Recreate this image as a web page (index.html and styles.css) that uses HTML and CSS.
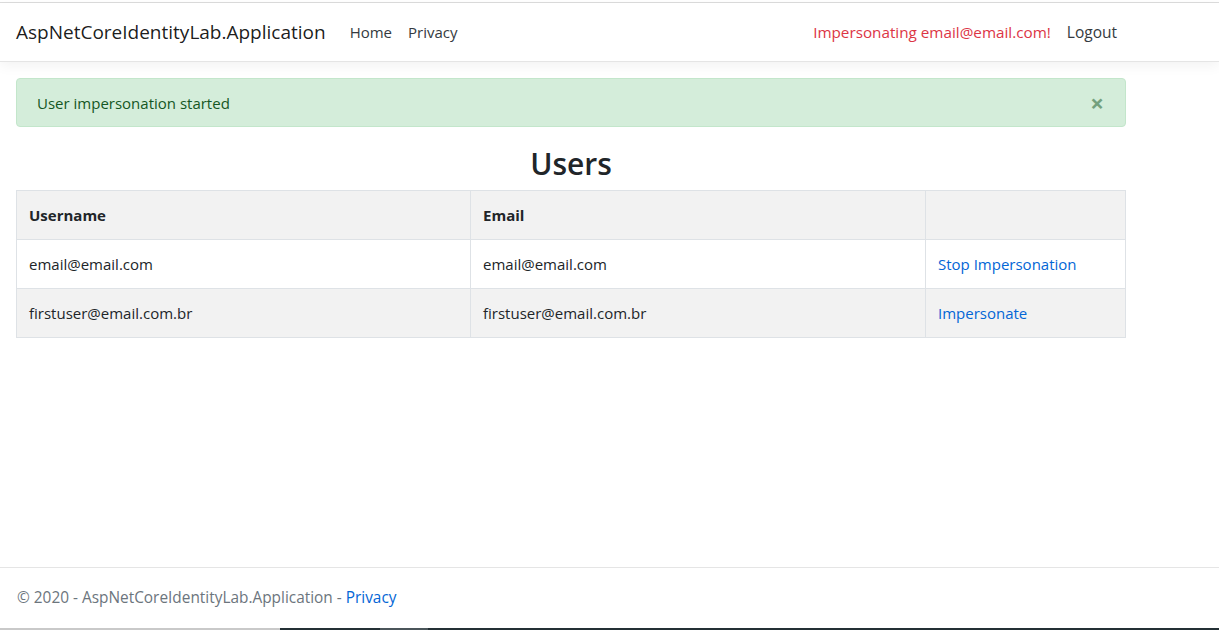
FILE: index.html
```html
<!DOCTYPE html>
<html lang="en">
<head>
<meta charset="utf-8">
<title>Users - AspNetCoreIdentityLab.Application</title>
<link rel="stylesheet" href="styles.css">
</head>
<body>
<div class="page">
  <div class="topline"></div>
  <header class="navbar">
    <div class="nav-container">
      <a class="brand" href="#">AspNetCoreIdentityLab.Application</a>
      <ul class="nav">
        <li><a class="nav-link" href="#">Home</a></li>
        <li><a class="nav-link" href="#">Privacy</a></li>
      </ul>
      <ul class="nav nav-right">
        <li><span class="nav-link text-danger">Impersonating email@email.com!</span></li>
        <li><a class="nav-link logout" href="#">Logout</a></li>
      </ul>
    </div>
  </header>
  <main class="container">
    <div class="alert" role="alert">
      <span>User impersonation started</span>
      <button class="close" type="button" aria-label="Close">×</button>
    </div>
    <h2 class="title">Users</h2>
    <table class="table">
      <colgroup>
        <col class="col-user">
        <col class="col-email">
        <col class="col-action">
      </colgroup>
      <thead>
        <tr><th>Username</th><th>Email</th><th></th></tr>
      </thead>
      <tbody>
        <tr><td>email@email.com</td><td>email@email.com</td><td><a href="#">Stop Impersonation</a></td></tr>
        <tr class="striped"><td>firstuser@email.com.br</td><td>firstuser@email.com.br</td><td><a href="#">Impersonate</a></td></tr>
      </tbody>
    </table>
  </main>
  <footer class="footer">
    <div class="footer-inner">© 2020 - AspNetCoreIdentityLab.Application - <a href="#">Privacy</a></div>
  </footer>
  <div class="bottom-strip">
    <span class="strip-light"></span>
    <span class="strip-dark"></span>
    <span class="strip-mid"></span>
    <span class="strip-dark fill"></span>
  </div>
</div>
</body>
</html>
```
FILE: styles.css
```css
* { box-sizing: border-box; }
html, body { margin: 0; padding: 0; height: 100%; }
body {
  font-family: "Open Sans", "Liberation Sans", sans-serif;
  font-size: 15px;
  line-height: 24px;
  color: #212529;
  background: #fff;
}
a { color: #0366d6; text-decoration: none; }

.page { display: flex; flex-direction: column; height: 100vh; overflow: hidden; }

.topline { height: 3px; border-bottom: 1px solid #dcdcdc; flex: none; }

.navbar {
  flex: none;
  height: 59px;
  border-bottom: 1px solid #e5e5e5;
  box-shadow: 0 4px 12px rgba(0, 0, 0, 0.05);
  display: flex;
  align-items: center;
  position: relative;
  z-index: 1;
}
.nav-container { display: flex; align-items: center; width: 1109px; margin-left: 16px; }
.brand { font-size: 19px; line-height: 30px; color: rgba(0, 0, 0, 0.9); margin-right: 16px; }
.nav { list-style: none; margin: 0; padding: 0; display: flex; }
.nav-right { margin-left: auto; }
.nav-link { display: block; padding: 8px; color: #343a40; }
.text-danger { color: #dc3545; font-size: 15.25px; }
.logout { font-size: 15.5px; }

.container { flex: 1; width: 1110px; margin: 16px 0 0 16px; }

.alert {
  display: flex;
  justify-content: space-between;
  align-items: center;
  height: 49px;
  padding: 0 20px;
  background: #d4edda;
  border: 1px solid #c3e6cb;
  border-radius: 4px;
  color: #155724;
  margin-bottom: 18px;
  width: 1110px;
}
.close {
  border: 0;
  background: transparent;
  padding: 0;
  margin-right: 1px;
  font-family: "Open Sans", sans-serif;
  font-size: 24px;
  font-weight: 700;
  line-height: 24px;
  color: #155724;
  opacity: 0.5;
}

.title {
  text-align: center;
  font-size: 30px;
  font-weight: 600;
  line-height: 38px;
  margin: 0 0 7px;
  color: #212529;
}

.table { width: 1110px; border-collapse: collapse; table-layout: fixed; }
.col-user { width: 454px; }
.col-email { width: 455px; }
.col-action { width: 200px; }
.table th, .table td {
  border: 1px solid #dee2e6;
  padding: 12px;
  height: 49px;
  text-align: left;
  vertical-align: middle;
}
.table th { font-weight: 700; }
.table thead tr, .table tr.striped { background: #f2f2f2; }

.footer { flex: none; height: 61px; border-top: 1px solid #e5e5e5; }
.footer-inner { line-height: 60px; padding-left: 17px; color: #6c757d; white-space: nowrap; font-size: 15.4px; }

.bottom-strip { flex: none; height: 2px; display: flex; }
.strip-light { width: 280px; background: #c9c9c9; }
.strip-dark { width: 100px; background: #243035; }
.strip-mid { width: 48px; background: #4b555a; }
.strip-dark.fill { flex: 1; }
```
